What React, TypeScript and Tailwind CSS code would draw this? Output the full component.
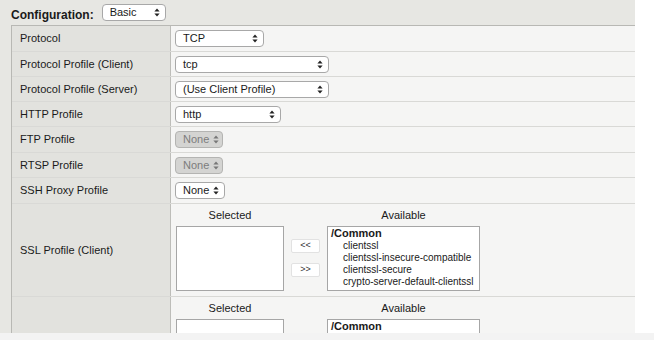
import React from 'react';

const font = { fontFamily: '"Liberation Sans", Arial, sans-serif' };

const Arrows: React.FC<{ dim?: boolean }> = ({ dim }) => (
    <svg width="6" height="9" viewBox="0 0 6 9" className="shrink-0">
        <path d="M3 0.5 L5.6 3.6 L0.4 3.6 Z" fill={dim ? '#777' : '#222'} />
        <path d="M3 8.5 L5.6 5.4 L0.4 5.4 Z" fill={dim ? '#777' : '#222'} />
    </svg>
);

const Select: React.FC<{ value: string; w: string; disabled?: boolean }> = ({ value, w, disabled }) => (
    <div
        className={`${w} h-[17px] rounded-[4px] border flex items-center justify-between pl-[7px] pr-[5px] gap-[4px] text-[11px] leading-none ${
            disabled ? 'bg-[#d4d4d2] border-[#b4b4b2] text-[#7c7c7c]' : 'bg-white border-[#a8a8a8] text-[#1a1a1a]'
        }`}
    >
        <span className="whitespace-nowrap">{value}</span>
        <Arrows dim={disabled} />
    </div>
);

const rows: { label: string; h: string; w: string; value: string; disabled?: boolean }[] = [
    { label: 'Protocol', h: 'h-[26px]', w: 'w-[89px]', value: 'TCP' },
    { label: 'Protocol Profile (Client)', h: 'h-[25px]', w: 'w-[154px]', value: 'tcp' },
    { label: 'Protocol Profile (Server)', h: 'h-[25px]', w: 'w-[154px]', value: '(Use Client Profile)' },
    { label: 'HTTP Profile', h: 'h-[25px]', w: 'w-[106px]', value: 'http' },
    { label: 'FTP Profile', h: 'h-[26px]', w: 'w-[48px]', value: 'None', disabled: true },
    { label: 'RTSP Profile', h: 'h-[25px]', w: 'w-[48px]', value: 'None', disabled: true },
    { label: 'SSH Proxy Profile', h: 'h-[26px]', w: 'w-[50px]', value: 'None' },
];

// selected / available pair with the move buttons between
const Chooser: React.FC<{ items: string[]; boxH: string; buttons?: boolean }> = ({ items, boxH, buttons = true }) => (
    <div className="flex flex-col pt-[4px]">
        <div className="flex items-end text-[11px] text-[#1a1a1a] h-[15px]">
            <div className="w-[108px] text-center">Selected</div>
            <div className="w-[43px]" />
            <div className="w-[153px] text-center">Available</div>
        </div>
        <div className="flex mt-[3px]">
            <div className={`w-[108px] ${boxH} bg-white border border-[#a6a6a6]`} />
            <div className="w-[43px] flex flex-col items-center pt-[13px] gap-[10px]">
                {buttons && (
                    <>
                        <div className="w-[29px] h-[14px] bg-white rounded-[2px] border border-[#e2e2e2] text-[9px] flex items-center justify-center text-[#333]">&lt;&lt;</div>
                        <div className="w-[29px] h-[14px] bg-white rounded-[2px] border border-[#e2e2e2] text-[9px] flex items-center justify-center text-[#333]">&gt;&gt;</div>
                    </>
                )}
            </div>
            <div className={`w-[153px] ${boxH} bg-white border border-[#a6a6a6] pl-[3px] text-[10px] leading-[12px] text-[#1a1a1a] overflow-hidden whitespace-nowrap`}>
                <div className="font-bold text-[11px] leading-[13px]">/Common</div>
                {items.map((it) => (
                    <div key={it} className="pl-[12px]">{it}</div>
                ))}
            </div>
        </div>
    </div>
);

export default function App() {
    return (
        <div className="w-[654px] h-[340px] bg-white overflow-hidden flex flex-col" style={font}>
            <div className="w-[635px] bg-[#e7e7e3] flex flex-col">
                <div className="h-[25px] flex items-center pl-[11px] gap-[8px]">
                    <span className="text-[12px] font-bold text-[#1a1a1a] mt-[4px]">Configuration:</span>
                    <Select value="Basic" w="w-[64px]" />
                </div>
                <div className="ml-[11px] border-l border-t border-[#b8b8b4] bg-[#f5f5f4] h-[308px] overflow-hidden">
                    {rows.map((r) => (
                        <div key={r.label} className={`grid grid-cols-[159px_1fr] ${r.h} border-b border-[#d9d9d6]`}>
                            <div className="bg-[#e2e2de] border-r border-[#bdbdb9] flex items-center pl-[8px] text-[11px] text-[#1a1a1a]">
                                {r.label}
                            </div>
                            <div className="flex items-center pl-[4px]">
                                <Select value={r.value} w={r.w} disabled={r.disabled} />
                            </div>
                        </div>
                    ))}
                    <div className="grid grid-cols-[159px_1fr] h-[93px] border-b border-[#d9d9d6]">
                        <div className="bg-[#e2e2de] border-r border-[#bdbdb9] flex items-center pl-[8px] text-[11px] text-[#1a1a1a]">
                            SSL Profile (Client)
                        </div>
                        <div className="pl-[5px]">
                            <Chooser boxH="h-[65px]" items={['clientssl', 'clientssl-insecure-compatible', 'clientssl-secure', 'crypto-server-default-clientssl']} />
                        </div>
                    </div>
                    <div className="grid grid-cols-[159px_1fr] h-[60px]">
                        <div className="bg-[#e2e2de] border-r border-[#bdbdb9]" />
                        <div className="pl-[5px] overflow-hidden">
                            <Chooser boxH="h-[16px]" items={[]} buttons={false} />
                        </div>
                    </div>
                </div>
            </div>
            <div className="flex-1 bg-[#f3f3f3]" />
        </div>
    );
}
